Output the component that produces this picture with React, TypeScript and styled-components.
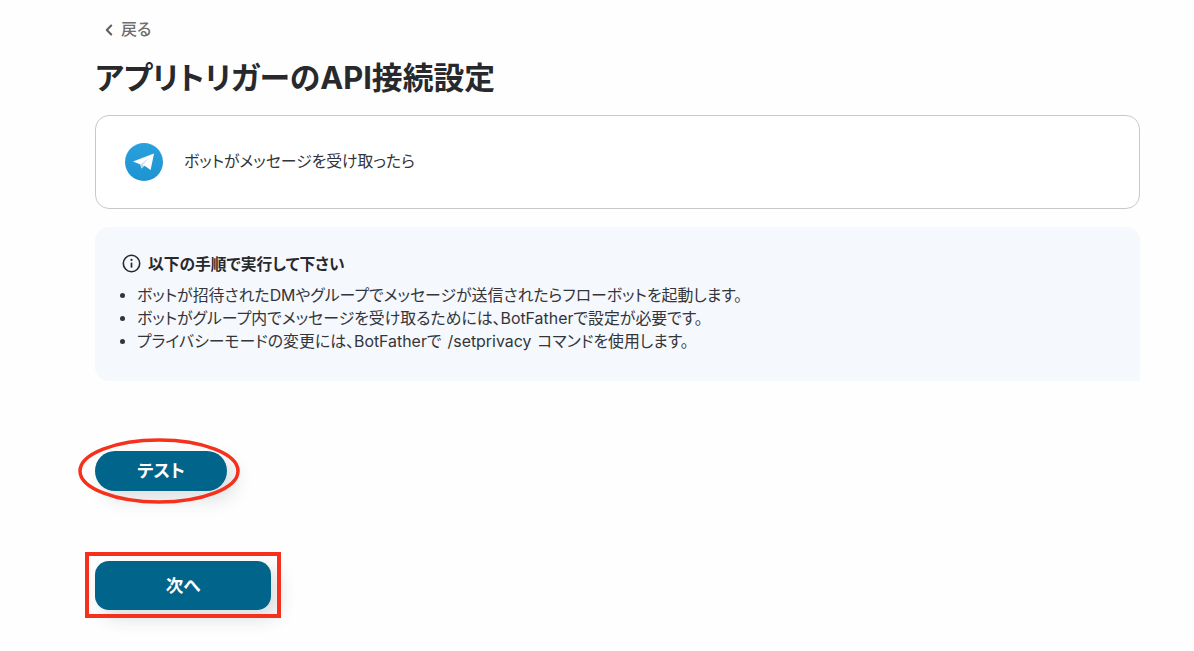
import React from "react";
import styled, { createGlobalStyle } from "styled-components";

const Global = createGlobalStyle`
  html, body { margin: 0; padding: 0; height: 100%; background: #fefefe; overflow: hidden; }
  body {
    font-family: Inter, "Noto Sans CJK JP", "Noto Sans", sans-serif;
    font-feature-settings: "palt";
    color: #27292d;
  }
`;

const Page = styled.main`
  width: 1045px;
  margin-left: 95px;
  display: flex;
  flex-direction: column;
  align-items: stretch;
`;

const BackLink = styled.a`
  display: flex;
  align-items: center;
  gap: 5px;
  margin: 20px 0 0 7px;
  height: 19px;
  font-size: 16px;
  font-weight: 500;
  line-height: 19px;
  color: #6e6e6e;
`;

const Title = styled.h1`
  margin: 17px 0 0;
  font-size: 30.8px;
  line-height: 44px;
  font-weight: 700;
  color: #27292d;
`;

const TriggerCard = styled.section`
  box-sizing: border-box;
  height: 94px;
  margin-top: 15px;
  padding: 0 29px;
  display: flex;
  align-items: center;
  gap: 21px;
  border: 1px solid #c8c8c8;
  border-radius: 14px;
  background: #fff;
  font-size: 15.85px;
  color: #33353a;
`;

const TriggerLabel = styled.span`
  margin-bottom: 3px;
`;

const InfoBox = styled.section`
  box-sizing: border-box;
  height: 154px;
  margin-top: 18px;
  padding: 25px 28px 0;
  border-radius: 14px 14px 0 14px;
  background: #f5f8fc;
`;

const InfoHeading = styled.div`
  display: flex;
  align-items: center;
  gap: 6px;
  height: 22px;
  font-size: 15.75px;
  font-weight: 700;
  color: #27292d;
`;

const InfoGlyph = styled.svg`
  flex: none;
  margin-left: -1px;
  margin-right: 1px;
`;

const InfoList = styled.ul`
  margin: 10px 0 0;
  padding: 0 0 0 14px;
  list-style: disc;
  font-size: 15.9px;
  line-height: 23px;
  word-spacing: 1.5px;
  color: #33353a;
`;

const InfoItem = styled.li`
  padding-left: 0;
`;

const TestWrap = styled.div`
  position: relative;
  width: 132px;
  margin-top: 70px;
`;

const NextWrap = styled.div`
  position: relative;
  width: 176px;
  margin-top: 70px;
`;

const ActionButton = styled.button<{ $pill?: boolean; $height: number }>`
  display: block;
  width: 100%;
  height: ${(p) => p.$height}px;
  padding: 0 0 3px;
  border: 0;
  border-radius: ${(p) => (p.$pill ? "20px" : "14px")};
  background: #01648a;
  color: #fff;
  font-family: inherit;
  font-feature-settings: inherit;
  font-size: 17.6px;
  font-weight: 700;
  box-shadow: 8px 8px 18px rgba(40, 50, 70, 0.16);
`;

const Ellipse = styled.svg`
  position: absolute;
  left: -17px;
  top: -14px;
  width: 162px;
  height: 68px;
  overflow: visible;
`;

const RedBox = styled.div`
  position: absolute;
  left: -10px;
  top: -9px;
  width: 196px;
  height: 66px;
  box-sizing: border-box;
  border: 4px solid #f5301c;
`;

const TelegramIcon = () => (
  <svg width="38" height="38" viewBox="0 0 38 38" aria-hidden="true">
    <defs>
      <linearGradient id="tg" x1="0.5" y1="0" x2="0.5" y2="1">
        <stop offset="0" stopColor="#2aa1dd" />
        <stop offset="1" stopColor="#1d93d2" />
      </linearGradient>
    </defs>
    <circle cx="19" cy="19" r="19" fill="url(#tg)" />
    <path d="M8 18.6 29 10.6 25.6 27 19.6 22.8 16.4 25.6 15.4 21.4Z" fill="#fff" />
    <path d="M15.4 21.4 16.4 25.6 17.2 22.2 24.4 15Z" fill="#c8daea" />
    <path d="M16.4 25.6 19.6 22.8 17.2 22.2Z" fill="#a9c9dd" />
  </svg>
);

export default function App() {
  return (
    <>
      <Global />
      <Page>
        <BackLink>
          <svg width="14" height="14" viewBox="0 0 14 14" fill="none" aria-hidden="true">
            <path d="M9.2 2.6 4.8 7l4.4 4.4" stroke="#5f5f5f" strokeWidth="2.1" strokeLinecap="round" strokeLinejoin="round" />
          </svg>
          戻る
        </BackLink>
        <Title>アプリトリガーのAPI接続設定</Title>
        <TriggerCard>
          <TelegramIcon />
          <TriggerLabel>ボットがメッセージを受け取ったら</TriggerLabel>
        </TriggerCard>
        <InfoBox>
          <InfoHeading>
            <InfoGlyph width="19" height="19" viewBox="0 0 19 19" fill="none" aria-hidden="true">
              <circle cx="9.5" cy="9.5" r="8.2" stroke="#27292d" strokeWidth="1.6" />
              <path d="M9.5 8.6v5" stroke="#27292d" strokeWidth="1.7" />
              <circle cx="9.5" cy="5.9" r="1.05" fill="#27292d" />
            </InfoGlyph>
            以下の手順で実行して下さい
          </InfoHeading>
          <InfoList>
            <InfoItem>ボットが招待されたDMやグループでメッセージが送信されたらフローボットを起動します。</InfoItem>
            <InfoItem>ボットがグループ内でメッセージを受け取るためには、BotFatherで設定が必要です。</InfoItem>
            <InfoItem>プライバシーモードの変更には、BotFatherで /setprivacy コマンドを使用します。</InfoItem>
          </InfoList>
        </InfoBox>
        <TestWrap>
          <ActionButton $pill $height={40}>テスト</ActionButton>
          <Ellipse viewBox="0 0 162 68" fill="none" aria-hidden="true">
            <ellipse cx="81" cy="34" rx="79" ry="31" stroke="#f5301c" strokeWidth="3.5" />
          </Ellipse>
        </TestWrap>
        <NextWrap>
          <ActionButton $height={49}>次へ</ActionButton>
          <RedBox />
        </NextWrap>
      </Page>
    </>
  );
}
